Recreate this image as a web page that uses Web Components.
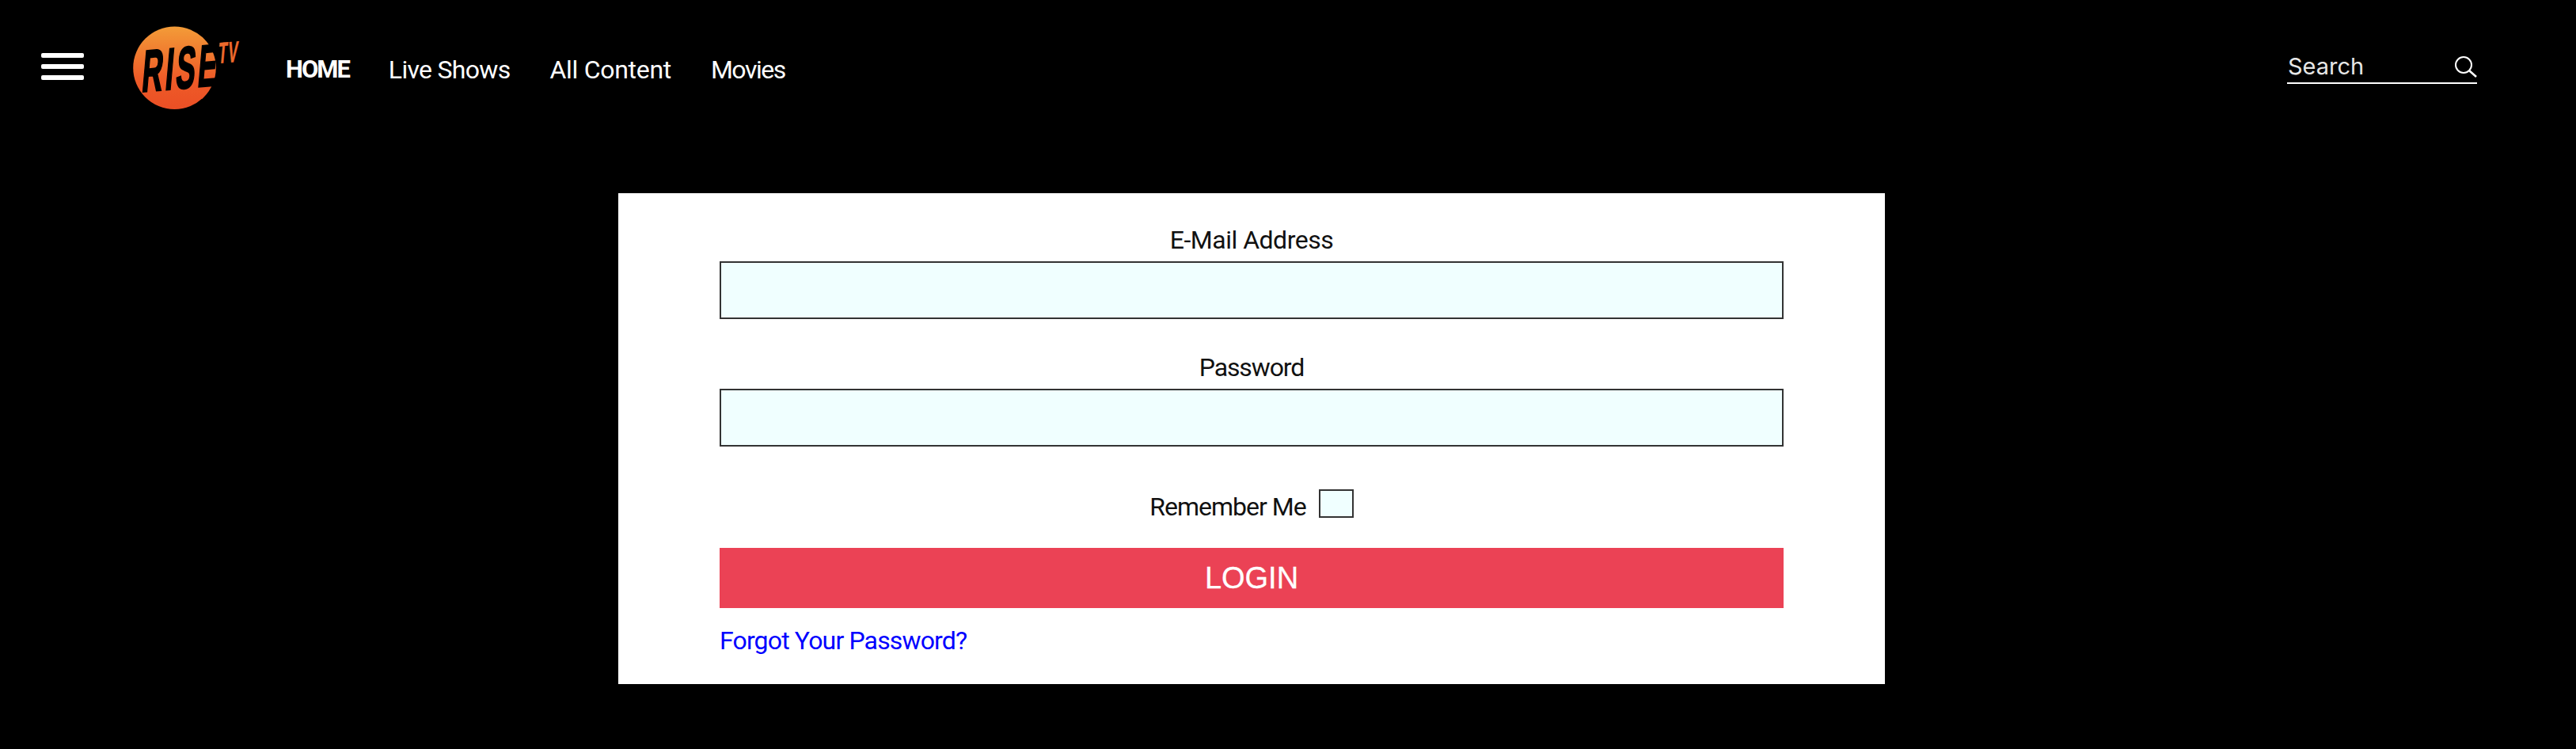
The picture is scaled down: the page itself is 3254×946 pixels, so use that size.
<!DOCTYPE html>
<html><head><meta charset="utf-8"><title>Rise TV</title>
<style>html,body{margin:0;background:#000;height:100%}body{font-family:Roboto,"Liberation Sans",sans-serif}</style>
</head><body>
<rise-app></rise-app>
<script>
function def(name, html){customElements.define(name, class extends HTMLElement{constructor(){super();this.attachShadow({mode:'open'}).innerHTML=html;}});}
def('rise-logo',`<style>:host{display:block;width:136px;height:104px}svg{display:block;overflow:visible}</style>
<svg width="136" height="104" viewBox="168 32 136 104"><defs><linearGradient id="g" x1="0" y1="0" x2="0" y2="1"><stop offset="0" stop-color="#F39C38"/><stop offset=".62" stop-color="#EE5C28"/><stop offset="1" stop-color="#EB4F25"/></linearGradient></defs>
<circle cx="220.5" cy="84.7" r="52.3" fill="url(#g)"/>
<text transform="translate(178 115) rotate(-5) skewX(-10) scale(.49 1)" font-family="'Liberation Sans',sans-serif" font-weight="700" font-size="74" letter-spacing="7" fill="#000" stroke="#000" stroke-width="2.4">RISE</text>
<text transform="translate(275 79) rotate(-5) skewX(-10) scale(.5 1)" font-family="'Liberation Sans',sans-serif" font-weight="700" font-size="37" letter-spacing="2" fill="#EE6A2C" stroke="#EE6A2C" stroke-width=".6">TV</text></svg>`);
def('menu-icon',`<style>:host{display:flex;flex-direction:column;gap:8px;width:54px}i{display:block;height:6px;border-radius:2px;background:#fff}</style><i></i><i></i><i></i>`);
def('nav-link',`<style>:host{display:block;font:400 32px/36px Roboto,sans-serif;color:#fff}:host([active]){font-weight:700;font-size:31px;letter-spacing:-2px}</style><slot></slot>`);
def('search-box',`<style>:host{display:flex;align-items:center;justify-content:space-between;width:240px;height:46px;box-sizing:border-box;border-bottom:2px solid #fff;color:#e6e6e6;font:400 29px/44px Inter,sans-serif;padding:0 0 0 1px}svg{display:block}span{position:relative;top:2px}</style><span>Search</span>
<svg width="34" height="34" viewBox="0 0 34 34" fill="none" stroke="#fff" stroke-width="2"><circle cx="17" cy="17" r="10"/><path d="M24.5 24.5L33 32" stroke-width="2.6"/></svg>`);
def('rise-header',`<style>:host{display:flex;align-items:center;height:170px;padding-left:52px;padding-right:125px;box-sizing:border-box}
menu-icon{margin-top:-3px}rise-logo{margin-left:62px}nav{display:flex;gap:50px;margin-left:57px;margin-top:5px}search-box{margin-left:auto;margin-top:-4px}</style>
<menu-icon></menu-icon><rise-logo></rise-logo><nav><nav-link active>HOME</nav-link><nav-link style="letter-spacing:-.7px">Live Shows</nav-link><nav-link style="letter-spacing:-.3px">All Content</nav-link><nav-link style="letter-spacing:-1.5px">Movies</nav-link></nav><search-box></search-box>`);
def('form-field',`<style>:host{display:block;text-align:center;font:400 32px/48px Roboto,sans-serif;color:#111}label{display:block;margin-bottom:3px}input{display:block;width:100%;height:73px;box-sizing:border-box;margin:0;padding:0 12px;border:2px solid #333;border-radius:0;background:#F0FFFF;outline:0}</style><label><slot></slot></label><input type="text">`);
def('login-card',`<style>:host{display:flex;flex-direction:column;width:1600px;height:620px;box-sizing:border-box;padding:35px 128px 0;background:#fff;font:400 32px/48px Roboto,sans-serif;color:#111}
form-field+form-field{margin-top:37px}
.rem{display:flex;justify-content:center;align-items:center;gap:16px;margin-top:54px;height:36px}
.rem span{position:relative;top:4px;letter-spacing:-1px}
.box{width:44px;height:36px;box-sizing:border-box;border:2px solid #333;background:#F0FFFF;appearance:none;margin:0}
button{display:block;width:100%;height:76px;margin:38px 0 0;padding:0;border:0;background:#EB4255;color:#fff;font:400 38px/76px "Liberation Sans",sans-serif;-webkit-text-stroke:.3px #fff}
a{display:block;margin-top:17px;color:#00f;text-decoration:none;letter-spacing:-.85px}</style>
<form-field style="letter-spacing:-.5px">E-Mail Address</form-field><form-field style="letter-spacing:-1.1px">Password</form-field>
<div class="rem"><span>Remember Me</span><input class="box" type="checkbox"></div>
<button>LOGIN</button><a href="#">Forgot Your Password?</a>`);
def('rise-app',`<style>:host{display:block;background:#000;height:946px;overflow:hidden}main{display:flex;justify-content:center;padding:74px 92px 0 0}</style><rise-header></rise-header><main><login-card></login-card></main>`);
</script></body></html>
